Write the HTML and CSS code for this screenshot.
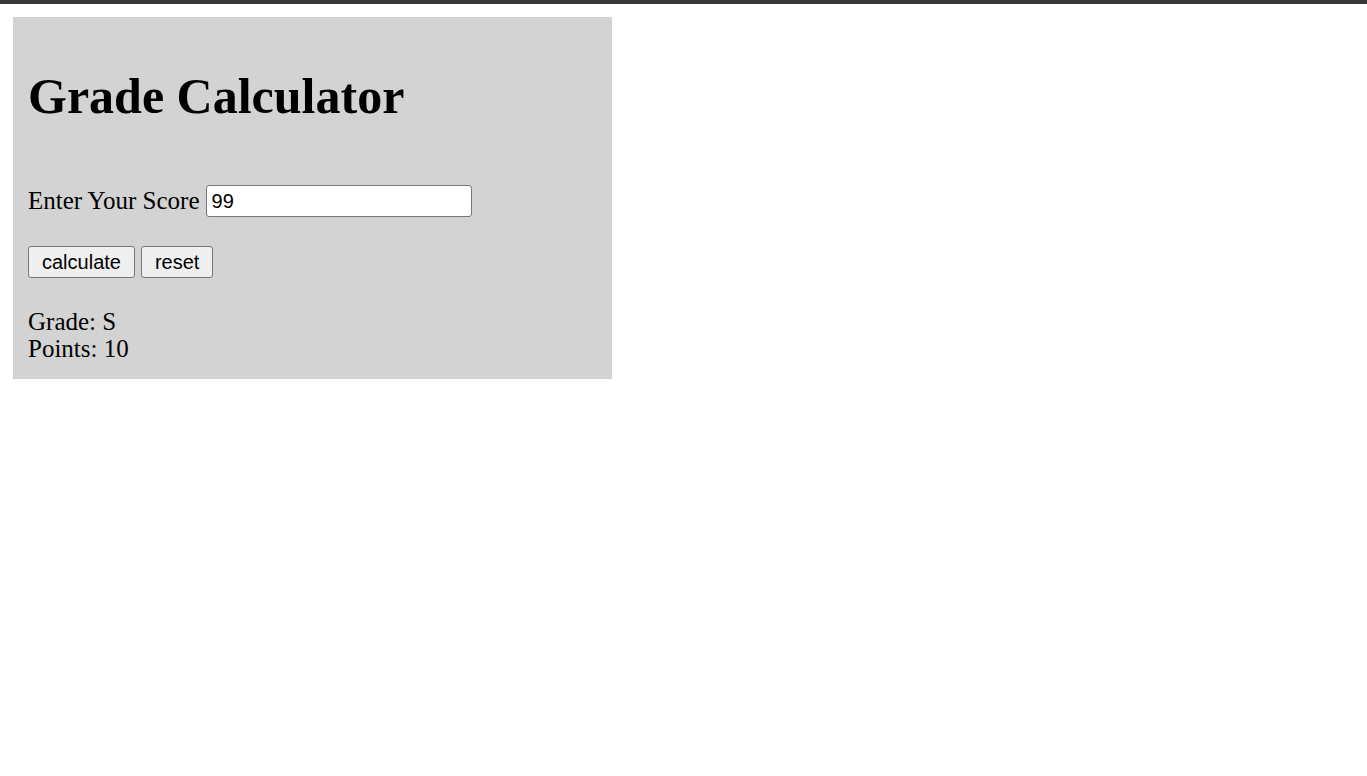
FILE: index.html
```html
<!DOCTYPE html>
<html>
<head>
<meta charset="utf-8">
<link rel="stylesheet" href="styles.css">
</head>
<body>
<div class="topbar"></div>
<div class="panel">
  <h1 class="title">Grade Calculator</h1>
  <div class="row">
    <label class="label" for="score">Enter Your Score</label>
    <input class="score" id="score" type="text" value="99">
  </div>
  <div class="buttons">
    <button class="btn">calculate</button>
    <button class="btn">reset</button>
  </div>
  <div class="result">
    <div>Grade: S</div>
    <div>Points: 10</div>
  </div>
</div>
</body>
</html>
```
FILE: styles.css
```css
html, body {
  margin: 0;
  padding: 0;
  background: #ffffff;
}
body {
  font-family: "Liberation Serif", "Times New Roman", serif;
  font-size: 25px;
  color: #000;
}
.topbar {
  height: 4px;
  background: #383838;
}
.panel {
  margin: 13px 0 0 13px;
  width: 599px;
  box-sizing: border-box;
  background: #d3d3d3;
  padding: 24px 15px 17px;
  display: flex;
  flex-direction: column;
  align-items: flex-start;
}
.title {
  font-size: 50px;
  font-weight: bold;
  margin: 26px 0 60px;
  line-height: normal;
}
.row {
  display: flex;
  align-items: center;
  gap: 6px;
  height: 32px;
}
.label {
  font-size: 25px;
}
.score {
  width: 266px;
  height: 32px;
  box-sizing: border-box;
  font-family: "Liberation Sans", Arial, sans-serif;
  font-size: 20px;
  padding: 1px 5px;
  border: 1px solid #767676;
  border-radius: 3px;
  background: #fff;
  margin: 0;
}
.buttons {
  display: flex;
  gap: 6px;
  margin-top: 29px;
}
.btn {
  height: 32px;
  font-family: "Liberation Sans", Arial, sans-serif;
  font-size: 20px;
  padding: 1px 13px;
  border: 1px solid #767676;
  border-radius: 3px;
  background: #efefef;
  color: #000;
  margin: 0;
}
.result {
  margin-top: 30px;
  line-height: 27px;
}
```
